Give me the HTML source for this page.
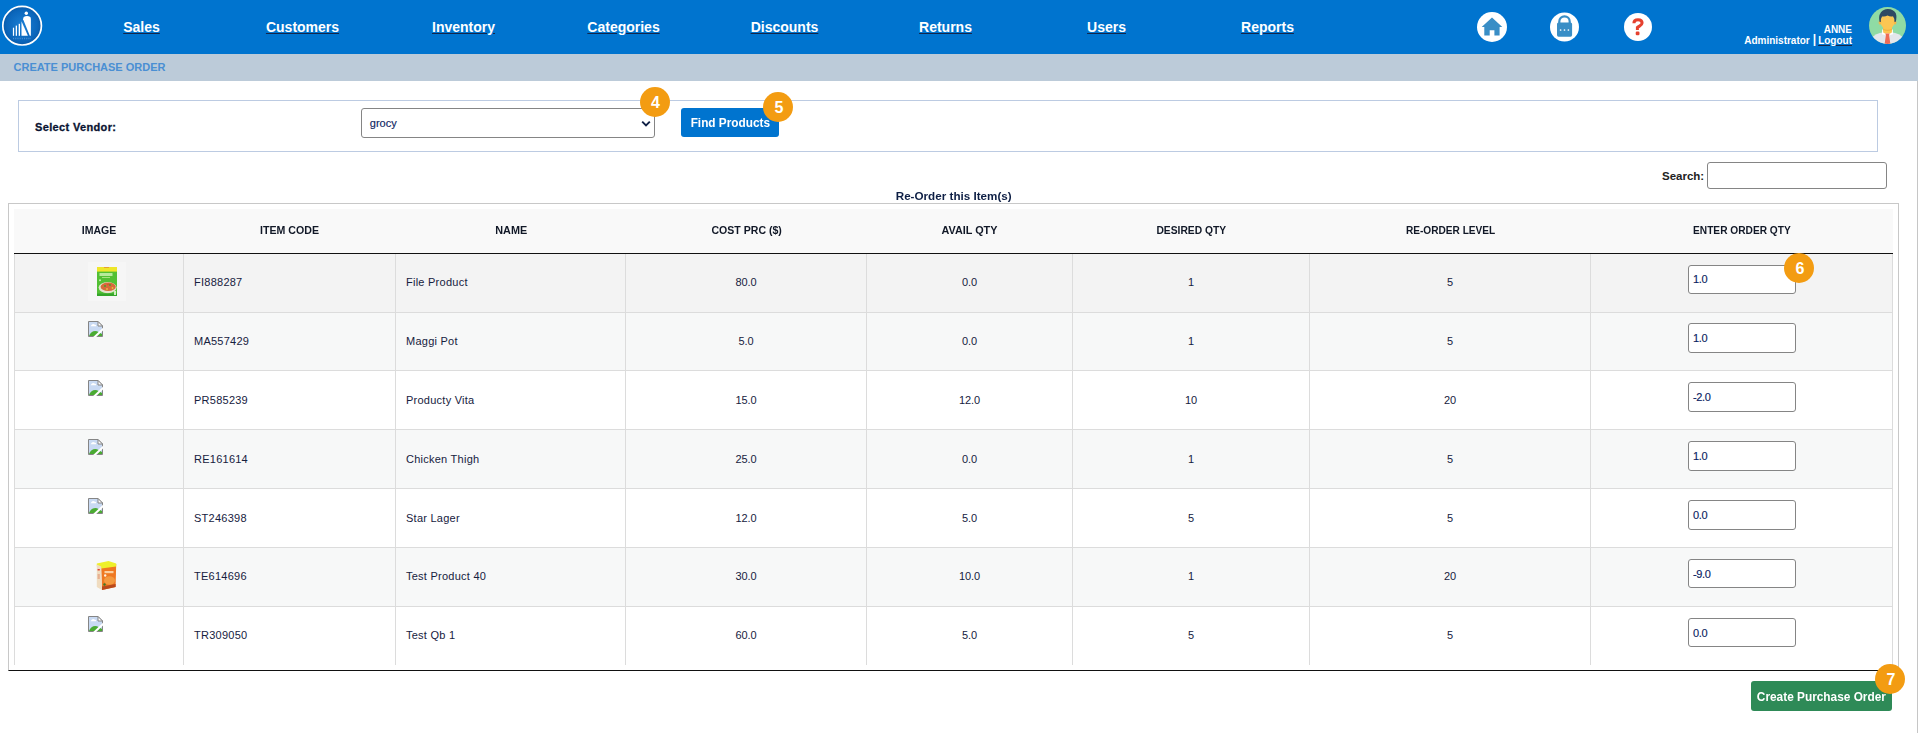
<!DOCTYPE html>
<html><head><meta charset="utf-8">
<style>
*{box-sizing:border-box;margin:0;padding:0}
html,body{width:1918px;height:733px;overflow:hidden;background:#fff;font-family:"Liberation Sans",sans-serif;position:relative}
.abs{position:absolute}
#hdr{position:absolute;left:0;top:0;width:1918px;height:54px;background:#0074cf}
.nav{position:absolute;top:19px;font-size:14px;font-weight:bold;color:#fff;text-decoration:underline;text-decoration-color:#14264a;text-underline-offset:1px;white-space:nowrap;transform:translateX(-50%);line-height:16px}
#sub{position:absolute;left:0;top:54px;width:1918px;height:27px;background:#bccbd9}
#sub span{position:absolute;left:13.5px;top:7px;font-size:11px;font-weight:bold;color:#4a8fd3;line-height:13px;white-space:nowrap}
.badge{position:absolute;width:30px;height:30px;border-radius:50%;background:#f39c12;color:#fff;font-weight:bold;font-size:16px;line-height:32px;text-indent:2px;text-align:center}
.uname{position:absolute;right:66px;font-size:10px;font-weight:bold;color:#fff;white-space:nowrap;line-height:11px;text-align:right}
.th{position:absolute;top:208.2px;height:44px;line-height:44px;font-size:11px;font-weight:bold;color:#111827;text-align:center;white-space:nowrap}
.td{position:absolute;font-size:11px;color:#16213e;white-space:nowrap;letter-spacing:0.25px}
.qty{position:absolute;left:1688px;width:108px;height:28px;border:1px solid #858585;border-radius:3px;background:#fff;font-size:11px;color:#0a2262;padding-left:5px;line-height:26px;letter-spacing:-0.35px;-webkit-text-stroke:0.15px #0a2262}
</style></head><body>
<div id="hdr">
<svg class="abs" style="left:0;top:3px" width="46" height="46" viewBox="0 0 46 46">
<defs><radialGradient id="lg" cx="50%" cy="50%" r="50%"><stop offset="0" stop-color="#1b7fd4"/><stop offset="0.8" stop-color="#0b66bb"/><stop offset="1" stop-color="#0a5aa8"/></radialGradient></defs>
<circle cx="22.1" cy="22.7" r="19.3" fill="url(#lg)" stroke="#fff" stroke-width="1.7"/>
<circle cx="26.3" cy="10.3" r="1.7" fill="#fff"/>
<path d="M23.1 16.2 C23 13.6 24.6 12.9 27 12.9 C29.4 12.9 30.9 13.6 30.9 16 L30.9 32.8 L29.8 32.8 Z" fill="#fff"/>
<path d="M21.5 18.2 L21.5 32.8 L27.9 32.8 Z" fill="#fff"/>
<rect x="12.9" y="24.7" width="1.2" height="8.1" fill="#fff"/>
<rect x="15.7" y="22.6" width="1.3" height="10.2" fill="#fff"/>
<rect x="18.7" y="20.8" width="1.3" height="12" fill="#fff"/>
<path d="M13 35.5 H31" stroke="#5a9ad8" stroke-width="1.4" stroke-dasharray="1.1 1.1" opacity="0.75"/>
</svg>
<div class="nav" style="left:141.5px">Sales</div>
<div class="nav" style="left:302.5px">Customers</div>
<div class="nav" style="left:463.5px">Inventory</div>
<div class="nav" style="left:623.5px">Categories</div>
<div class="nav" style="left:784.5px">Discounts</div>
<div class="nav" style="left:945.5px">Returns</div>
<div class="nav" style="left:1106.5px">Users</div>
<div class="nav" style="left:1267.5px">Reports</div>
<svg class="abs" style="left:1477px;top:12px" width="30" height="30" viewBox="0 0 30 30"><circle cx="15" cy="15" r="15" fill="#fff"/>
<path d="M15 5.6 L25.3 15 L22.6 15 L22.6 23.6 L17.4 23.6 L17.4 18.2 L12.7 18.2 L12.7 23.6 L7.3 23.6 L7.3 15 L4.7 15 Z" fill="#398ec6"/></svg>
<svg class="abs" style="left:1550px;top:12px" width="30" height="30" viewBox="0 0 30 30"><circle cx="14.5" cy="15" r="14.5" fill="#fff"/>
<path d="M9.3 11 L9.3 9.5 A5.2 5.2 0 0 1 19.7 9.5 L19.7 11" fill="none" stroke="#398ec6" stroke-width="2.2"/>
<rect x="7" y="10.4" width="15.1" height="14.3" rx="1.6" fill="#398ec6"/>
<circle cx="10.6" cy="18" r="0.85" fill="#fff"/><circle cx="14.5" cy="18" r="0.85" fill="#fff"/><circle cx="18.4" cy="18" r="0.85" fill="#fff"/></svg>
<svg class="abs" style="left:1624px;top:13px" width="28" height="28" viewBox="0 0 28 28"><circle cx="14" cy="14" r="14" fill="#fff"/>
<path d="M9.9 10.2 C9.9 7.6 11.6 6.7 14 6.7 C16.6 6.7 18.1 8 18.1 10 C18.1 12.3 15.8 12.6 13.4 14.4 L13.4 16.9" fill="none" stroke="#e5412f" stroke-width="3"/><rect x="11.7" y="18.6" width="3.8" height="3.6" rx="1.2" fill="#e5412f"/></svg>
<div class="uname" style="top:24px">ANNE</div>
<div class="uname" style="top:35px">Administrator<span style="font-weight:bold;font-size:12px;position:relative;top:-1px;margin:0 2px 0 3px">|</span><span style="text-decoration:underline;text-decoration-color:#14264a">Logout</span></div>
<svg class="abs" style="left:1869px;top:7px" width="37" height="37" viewBox="0 0 37 37">
<defs><clipPath id="ac"><circle cx="18.5" cy="18.5" r="18.5"/></clipPath></defs>
<circle cx="18.5" cy="18.5" r="18.5" fill="#8fdba4"/>
<g clip-path="url(#ac)">
<ellipse cx="18.5" cy="39.5" rx="20" ry="14.5" fill="#e4e7ec"/>
<path d="M13.2 22.6 L23.8 22.6 L24 27.2 L18.5 28.4 L13 27.2 Z" fill="#fff"/>
<rect x="14" y="17" width="9" height="9.6" rx="2.5" fill="#fcc653"/>
<path d="M14 21.5 Q18.5 24 23 21.5 L23 23 Q18.5 25 14 23 Z" fill="#f0b444"/>
<path d="M16.3 26.6 L20.7 26.6 L20.1 28.3 L21.4 37 L15.6 37 L16.9 28.3 Z" fill="#ef6b55"/>
<ellipse cx="18.5" cy="14.4" rx="7.3" ry="7.7" fill="#fcc653"/>
<ellipse cx="10.9" cy="15.6" rx="1.3" ry="2.1" fill="#f4b848"/>
<ellipse cx="26.1" cy="15.6" rx="1.3" ry="2.1" fill="#f4b848"/>
<path d="M10.6 15 Q9.2 9.4 11.8 5.6 Q14.4 1.8 19 1.9 Q24.6 2 26.8 6.2 Q28.2 9.8 26.6 15 L25.4 14.8 Q25.6 11 24 9.2 Q21.5 9.9 18.5 8.6 Q15.8 10 13 9.4 Q11.6 11.4 11.8 15 Z" fill="#2f4a63"/>
</g></svg>
</div>
<div id="sub"><span>CREATE PURCHASE ORDER</span></div>
<div class="abs" style="left:1917px;top:81px;width:1px;height:652px;background:#c6c6c6"></div>
<div class="abs" style="left:18px;top:100px;width:1860px;height:52px;border:1px solid #bccbe2"></div>
<div class="abs" style="left:35px;top:121px;font-size:11px;font-weight:bold;color:#0a1433;letter-spacing:0.35px;-webkit-text-stroke:0.3px #0a1433;white-space:nowrap;line-height:13px">Select Vendor:</div>
<div class="abs" style="left:361px;top:108px;width:294px;height:30px;border:1px solid #858585;border-radius:3px;background:#fff"></div>
<div class="abs" style="left:369.8px;top:117px;font-size:11px;color:#0c2462;line-height:13px;-webkit-text-stroke:0.15px #0c2462">grocy</div>
<svg class="abs" style="left:641px;top:119.5px" width="10" height="8" viewBox="0 0 10 8"><path d="M1.2 1.6 L5 5.4 L8.8 1.6" fill="none" stroke="#0f1f45" stroke-width="1.9"/></svg>
<div class="abs" style="left:681px;top:108px;width:98px;height:29px;background:#0074cf;border-radius:3px;color:#fff;font-size:12px;font-weight:bold;text-align:center;line-height:31px;white-space:nowrap"><span style="display:inline-block;transform:scaleX(0.984)">Find Products</span></div>
<div class="badge" style="left:639.5px;top:87px">4</div>
<div class="badge" style="left:763px;top:92px">5</div>
<div class="abs" style="left:1662px;top:169.7px;font-size:11.5px;font-weight:bold;color:#222;line-height:13px">Search:</div>
<div class="abs" style="left:1707px;top:162px;width:180px;height:27px;border:1px solid #858585;border-radius:3px;background:#fff"></div>
<div class="abs" style="left:0.8px;width:1906px;top:189.8px;font-size:11px;font-weight:bold;color:#0e1f45;text-align:center;line-height:13px"><span style="display:inline-block;transform:scaleX(1.06)">Re-Order this Item(s)</span></div>
<div class="abs" style="left:8px;top:203px;width:891px;height:468px;border:1px solid #c8c8c8;border-bottom-color:#111;width:1891px"></div>
<div class="abs" style="left:14px;top:209px;width:1879px;height:44px;background:#f9f9f9"></div>
<div class="th" style="left:14.8px;width:169px"><span style="display:inline-block;transform:scaleX(0.958)">IMAGE</span></div>
<div class="th" style="left:183.8px;width:212px"><span style="display:inline-block;transform:scaleX(0.965)">ITEM CODE</span></div>
<div class="th" style="left:395.8px;width:230px"><span style="display:inline-block;transform:scaleX(0.985)">NAME</span></div>
<div class="th" style="left:625.8px;width:241px"><span style="display:inline-block;transform:scaleX(0.959)">COST PRC ($)</span></div>
<div class="th" style="left:866.8px;width:206px"><span style="display:inline-block;transform:scaleX(0.984)">AVAIL QTY</span></div>
<div class="th" style="left:1072.8px;width:237px"><span style="display:inline-block;transform:scaleX(0.935)">DESIRED QTY</span></div>
<div class="th" style="left:1309.8px;width:281px"><span style="display:inline-block;transform:scaleX(0.92)">RE-ORDER LEVEL</span></div>
<div class="th" style="left:1590.8px;width:303px"><span style="display:inline-block;transform:scaleX(0.924)">ENTER ORDER QTY</span></div>
<div class="abs" style="left:14px;top:253px;width:1879px;height:1px;background:#111"></div>
<div class="abs" style="left:14px;top:254.00px;width:1879px;height:59.00px;background:#f3f3f3"></div>
<div class="abs" style="left:14px;top:312.00px;width:1879px;height:1px;background:#dcdcdc"></div>
<div class="td" style="left:194px;top:275.90px;line-height:13px">FI888287</div>
<div class="td" style="left:406px;top:275.90px;line-height:13px">File Product</div>
<div class="td" style="left:625.5px;width:241px;text-align:center;top:275.90px;line-height:13px;letter-spacing:-0.15px">80.0</div>
<div class="td" style="left:866.5px;width:206px;text-align:center;top:275.90px;line-height:13px;letter-spacing:-0.15px">0.0</div>
<div class="td" style="left:1072.5px;width:237px;text-align:center;top:275.90px;line-height:13px;letter-spacing:-0.15px">1</div>
<div class="td" style="left:1309.5px;width:281px;text-align:center;top:275.90px;line-height:13px;letter-spacing:-0.15px">5</div>
<div class="qty" style="top:265px;height:29px"><span style="position:absolute;left:4px;top:6.90px;line-height:13px">1.0</span></div>
<div class="abs" style="left:14px;top:313.00px;width:1879px;height:58.00px;background:#f7f8f8"></div>
<div class="abs" style="left:14px;top:370.00px;width:1879px;height:1px;background:#dcdcdc"></div>
<div class="td" style="left:194px;top:334.90px;line-height:13px">MA557429</div>
<div class="td" style="left:406px;top:334.90px;line-height:13px">Maggi Pot</div>
<div class="td" style="left:625.5px;width:241px;text-align:center;top:334.90px;line-height:13px;letter-spacing:-0.15px">5.0</div>
<div class="td" style="left:866.5px;width:206px;text-align:center;top:334.90px;line-height:13px;letter-spacing:-0.15px">0.0</div>
<div class="td" style="left:1072.5px;width:237px;text-align:center;top:334.90px;line-height:13px;letter-spacing:-0.15px">1</div>
<div class="td" style="left:1309.5px;width:281px;text-align:center;top:334.90px;line-height:13px;letter-spacing:-0.15px">5</div>
<div class="qty" style="top:323px;height:30px"><span style="position:absolute;left:4px;top:7.90px;line-height:13px">1.0</span></div>
<div class="abs" style="left:14px;top:371.00px;width:1879px;height:59.00px;background:#ffffff"></div>
<div class="abs" style="left:14px;top:429.00px;width:1879px;height:1px;background:#dcdcdc"></div>
<div class="td" style="left:194px;top:393.90px;line-height:13px">PR585239</div>
<div class="td" style="left:406px;top:393.90px;line-height:13px">Producty Vita</div>
<div class="td" style="left:625.5px;width:241px;text-align:center;top:393.90px;line-height:13px;letter-spacing:-0.15px">15.0</div>
<div class="td" style="left:866.5px;width:206px;text-align:center;top:393.90px;line-height:13px;letter-spacing:-0.15px">12.0</div>
<div class="td" style="left:1072.5px;width:237px;text-align:center;top:393.90px;line-height:13px;letter-spacing:-0.15px">10</div>
<div class="td" style="left:1309.5px;width:281px;text-align:center;top:393.90px;line-height:13px;letter-spacing:-0.15px">20</div>
<div class="qty" style="top:382px;height:30px"><span style="position:absolute;left:4px;top:7.90px;line-height:13px">-2.0</span></div>
<div class="abs" style="left:14px;top:430.00px;width:1879px;height:59.00px;background:#f7f8f8"></div>
<div class="abs" style="left:14px;top:488.00px;width:1879px;height:1px;background:#dcdcdc"></div>
<div class="td" style="left:194px;top:452.90px;line-height:13px">RE161614</div>
<div class="td" style="left:406px;top:452.90px;line-height:13px">Chicken Thigh</div>
<div class="td" style="left:625.5px;width:241px;text-align:center;top:452.90px;line-height:13px;letter-spacing:-0.15px">25.0</div>
<div class="td" style="left:866.5px;width:206px;text-align:center;top:452.90px;line-height:13px;letter-spacing:-0.15px">0.0</div>
<div class="td" style="left:1072.5px;width:237px;text-align:center;top:452.90px;line-height:13px;letter-spacing:-0.15px">1</div>
<div class="td" style="left:1309.5px;width:281px;text-align:center;top:452.90px;line-height:13px;letter-spacing:-0.15px">5</div>
<div class="qty" style="top:441px;height:30px"><span style="position:absolute;left:4px;top:7.90px;line-height:13px">1.0</span></div>
<div class="abs" style="left:14px;top:489.00px;width:1879px;height:59.00px;background:#ffffff"></div>
<div class="abs" style="left:14px;top:547.00px;width:1879px;height:1px;background:#dcdcdc"></div>
<div class="td" style="left:194px;top:511.90px;line-height:13px">ST246398</div>
<div class="td" style="left:406px;top:511.90px;line-height:13px">Star Lager</div>
<div class="td" style="left:625.5px;width:241px;text-align:center;top:511.90px;line-height:13px;letter-spacing:-0.15px">12.0</div>
<div class="td" style="left:866.5px;width:206px;text-align:center;top:511.90px;line-height:13px;letter-spacing:-0.15px">5.0</div>
<div class="td" style="left:1072.5px;width:237px;text-align:center;top:511.90px;line-height:13px;letter-spacing:-0.15px">5</div>
<div class="td" style="left:1309.5px;width:281px;text-align:center;top:511.90px;line-height:13px;letter-spacing:-0.15px">5</div>
<div class="qty" style="top:500px;height:30px"><span style="position:absolute;left:4px;top:7.90px;line-height:13px">0.0</span></div>
<div class="abs" style="left:14px;top:548.00px;width:1879px;height:59.00px;background:#f7f8f8"></div>
<div class="abs" style="left:14px;top:606.00px;width:1879px;height:1px;background:#dcdcdc"></div>
<div class="td" style="left:194px;top:569.90px;line-height:13px">TE614696</div>
<div class="td" style="left:406px;top:569.90px;line-height:13px">Test Product 40</div>
<div class="td" style="left:625.5px;width:241px;text-align:center;top:569.90px;line-height:13px;letter-spacing:-0.15px">30.0</div>
<div class="td" style="left:866.5px;width:206px;text-align:center;top:569.90px;line-height:13px;letter-spacing:-0.15px">10.0</div>
<div class="td" style="left:1072.5px;width:237px;text-align:center;top:569.90px;line-height:13px;letter-spacing:-0.15px">1</div>
<div class="td" style="left:1309.5px;width:281px;text-align:center;top:569.90px;line-height:13px;letter-spacing:-0.15px">20</div>
<div class="qty" style="top:559px;height:29px"><span style="position:absolute;left:4px;top:7.90px;line-height:13px">-9.0</span></div>
<div class="abs" style="left:14px;top:607.00px;width:1879px;height:58.00px;background:#ffffff"></div>
<div class="td" style="left:194px;top:628.90px;line-height:13px">TR309050</div>
<div class="td" style="left:406px;top:628.90px;line-height:13px">Test Qb 1</div>
<div class="td" style="left:625.5px;width:241px;text-align:center;top:628.90px;line-height:13px;letter-spacing:-0.15px">60.0</div>
<div class="td" style="left:866.5px;width:206px;text-align:center;top:628.90px;line-height:13px;letter-spacing:-0.15px">5.0</div>
<div class="td" style="left:1072.5px;width:237px;text-align:center;top:628.90px;line-height:13px;letter-spacing:-0.15px">5</div>
<div class="td" style="left:1309.5px;width:281px;text-align:center;top:628.90px;line-height:13px;letter-spacing:-0.15px">5</div>
<div class="qty" style="top:618px;height:29px"><span style="position:absolute;left:4px;top:7.90px;line-height:13px">0.0</span></div>
<div class="abs" style="left:14px;top:254px;width:1px;height:411.00px;background:#dcdcdc"></div>
<div class="abs" style="left:183px;top:254px;width:1px;height:411.00px;background:#dcdcdc"></div>
<div class="abs" style="left:395px;top:254px;width:1px;height:411.00px;background:#dcdcdc"></div>
<div class="abs" style="left:625px;top:254px;width:1px;height:411.00px;background:#dcdcdc"></div>
<div class="abs" style="left:866px;top:254px;width:1px;height:411.00px;background:#dcdcdc"></div>
<div class="abs" style="left:1072px;top:254px;width:1px;height:411.00px;background:#dcdcdc"></div>
<div class="abs" style="left:1309px;top:254px;width:1px;height:411.00px;background:#dcdcdc"></div>
<div class="abs" style="left:1590px;top:254px;width:1px;height:411.00px;background:#dcdcdc"></div>
<div class="abs" style="left:1892px;top:254px;width:1px;height:411.00px;background:#dcdcdc"></div>
<div class="abs" style="left:88px;top:262px;width:38px;height:39px;background:#f6f6f6"></div>
<svg class="abs" style="left:97px;top:267px" width="20" height="29" viewBox="0 0 20 29">
<defs><filter id="bl" x="-10%" y="-10%" width="120%" height="120%"><feGaussianBlur stdDeviation="0.35"/></filter></defs>
<g filter="url(#bl)">
<rect x="0" y="0" width="20" height="29" fill="#52c036"/>
<rect x="0" y="0" width="20" height="4.6" fill="#eee62c"/>
<rect x="7" y="0" width="5" height="1" fill="#e8a030"/>
<rect x="2.5" y="6" width="13" height="3" fill="#b8ea9c"/>
<rect x="5" y="10" width="8" height="1" fill="#a8e080"/>
<circle cx="3" cy="13.2" r="1" fill="#c8f0b0"/>
<ellipse cx="10.6" cy="20.6" rx="9" ry="5.6" fill="#e4e2cc"/>
<ellipse cx="11.2" cy="19.8" rx="7.6" ry="4.3" fill="#d86a3a"/>
<circle cx="8" cy="19" r="1" fill="#4c9a2a"/><circle cx="13" cy="18" r="0.9" fill="#4c9a2a"/><circle cx="15.5" cy="21" r="0.9" fill="#e8c040"/><circle cx="10" cy="22" r="0.9" fill="#e8c040"/><circle cx="11" cy="17.5" r="0.8" fill="#e04a2a"/>
<rect x="0" y="26.5" width="20" height="2.5" fill="#36a52c"/>
<rect x="17" y="24" width="2" height="4" fill="#d0f0c0"/>
</g></svg>
<svg class="abs" style="left:96px;top:561px" width="21" height="29" viewBox="0 0 21 29">
<g filter="url(#bl)">
<path d="M5 5.5 L20.2 3 L19.6 26 L6 29 Z" fill="#ef7820"/>
<path d="M0.8 2.6 L12.5 0 L20.2 2.6 L20.2 5.6 L5.2 7.6 L0.8 5.4 Z" fill="#eef02c"/>
<path d="M0.8 3.4 L5.2 5.6 L6 29 L0.8 26 Z" fill="#f0dcc0"/>
<rect x="1.6" y="8" width="2.2" height="1.5" fill="#e04030"/><rect x="1.6" y="13" width="2.2" height="5" fill="#e8b090"/>
<rect x="8.5" y="10" width="9" height="2.2" fill="#fbd0a0"/>
<ellipse cx="13.5" cy="19.5" rx="5.5" ry="4.2" fill="#f39a40"/>
<circle cx="9.2" cy="14.5" r="1.2" fill="#fff2e0"/>
<path d="M6 25.5 L19.6 23 L19.6 26 L6 29 Z" fill="#b8481e"/>
<circle cx="8.5" cy="23.5" r="1.2" fill="#3a7a2a"/>
</g></svg>
<svg class="abs" style="left:88px;top:321px" width="15" height="16" viewBox="0 0 15 16">
<path d="M0.5 0.5 L10 0.5 L14.5 5 L14.5 15.5 L0.5 15.5 Z" fill="#c9daf3" stroke="#858585" stroke-width="1"/>
<path d="M10 0.5 L10 5 L14.5 5 Z" fill="#fff" stroke="#858585" stroke-width="1" stroke-linejoin="round"/>
<path d="M2.6 5.2 Q4.5 1.8 6.5 3.4 Q8.5 3.6 8.3 5.2 Z" fill="#fff"/>
<path d="M1 15 Q3.5 9 9 10.2 L14 13 L14 15 Z" fill="#4aab32"/>
<path d="M5.2 16 L15 6.8 L15 9.6 L8.2 16 Z" fill="#fff"/></svg>
<svg class="abs" style="left:88px;top:380px" width="15" height="16" viewBox="0 0 15 16">
<path d="M0.5 0.5 L10 0.5 L14.5 5 L14.5 15.5 L0.5 15.5 Z" fill="#c9daf3" stroke="#858585" stroke-width="1"/>
<path d="M10 0.5 L10 5 L14.5 5 Z" fill="#fff" stroke="#858585" stroke-width="1" stroke-linejoin="round"/>
<path d="M2.6 5.2 Q4.5 1.8 6.5 3.4 Q8.5 3.6 8.3 5.2 Z" fill="#fff"/>
<path d="M1 15 Q3.5 9 9 10.2 L14 13 L14 15 Z" fill="#4aab32"/>
<path d="M5.2 16 L15 6.8 L15 9.6 L8.2 16 Z" fill="#fff"/></svg>
<svg class="abs" style="left:88px;top:439px" width="15" height="16" viewBox="0 0 15 16">
<path d="M0.5 0.5 L10 0.5 L14.5 5 L14.5 15.5 L0.5 15.5 Z" fill="#c9daf3" stroke="#858585" stroke-width="1"/>
<path d="M10 0.5 L10 5 L14.5 5 Z" fill="#fff" stroke="#858585" stroke-width="1" stroke-linejoin="round"/>
<path d="M2.6 5.2 Q4.5 1.8 6.5 3.4 Q8.5 3.6 8.3 5.2 Z" fill="#fff"/>
<path d="M1 15 Q3.5 9 9 10.2 L14 13 L14 15 Z" fill="#4aab32"/>
<path d="M5.2 16 L15 6.8 L15 9.6 L8.2 16 Z" fill="#fff"/></svg>
<svg class="abs" style="left:88px;top:498px" width="15" height="16" viewBox="0 0 15 16">
<path d="M0.5 0.5 L10 0.5 L14.5 5 L14.5 15.5 L0.5 15.5 Z" fill="#c9daf3" stroke="#858585" stroke-width="1"/>
<path d="M10 0.5 L10 5 L14.5 5 Z" fill="#fff" stroke="#858585" stroke-width="1" stroke-linejoin="round"/>
<path d="M2.6 5.2 Q4.5 1.8 6.5 3.4 Q8.5 3.6 8.3 5.2 Z" fill="#fff"/>
<path d="M1 15 Q3.5 9 9 10.2 L14 13 L14 15 Z" fill="#4aab32"/>
<path d="M5.2 16 L15 6.8 L15 9.6 L8.2 16 Z" fill="#fff"/></svg>
<svg class="abs" style="left:88px;top:616px" width="15" height="16" viewBox="0 0 15 16">
<path d="M0.5 0.5 L10 0.5 L14.5 5 L14.5 15.5 L0.5 15.5 Z" fill="#c9daf3" stroke="#858585" stroke-width="1"/>
<path d="M10 0.5 L10 5 L14.5 5 Z" fill="#fff" stroke="#858585" stroke-width="1" stroke-linejoin="round"/>
<path d="M2.6 5.2 Q4.5 1.8 6.5 3.4 Q8.5 3.6 8.3 5.2 Z" fill="#fff"/>
<path d="M1 15 Q3.5 9 9 10.2 L14 13 L14 15 Z" fill="#4aab32"/>
<path d="M5.2 16 L15 6.8 L15 9.6 L8.2 16 Z" fill="#fff"/></svg>
<div class="badge" style="left:1784px;top:253px">6</div>
<div class="abs" style="left:1751px;top:681px;width:141px;height:30px;background:#2e8a57;border-radius:3px;color:#fff;font-size:12px;font-weight:bold;text-align:center;line-height:32px;white-space:nowrap"><span style="display:inline-block;transform:scaleX(0.987)">Create Purchase Order</span></div>
<div class="badge" style="left:1875px;top:664px">7</div>
</body></html>
